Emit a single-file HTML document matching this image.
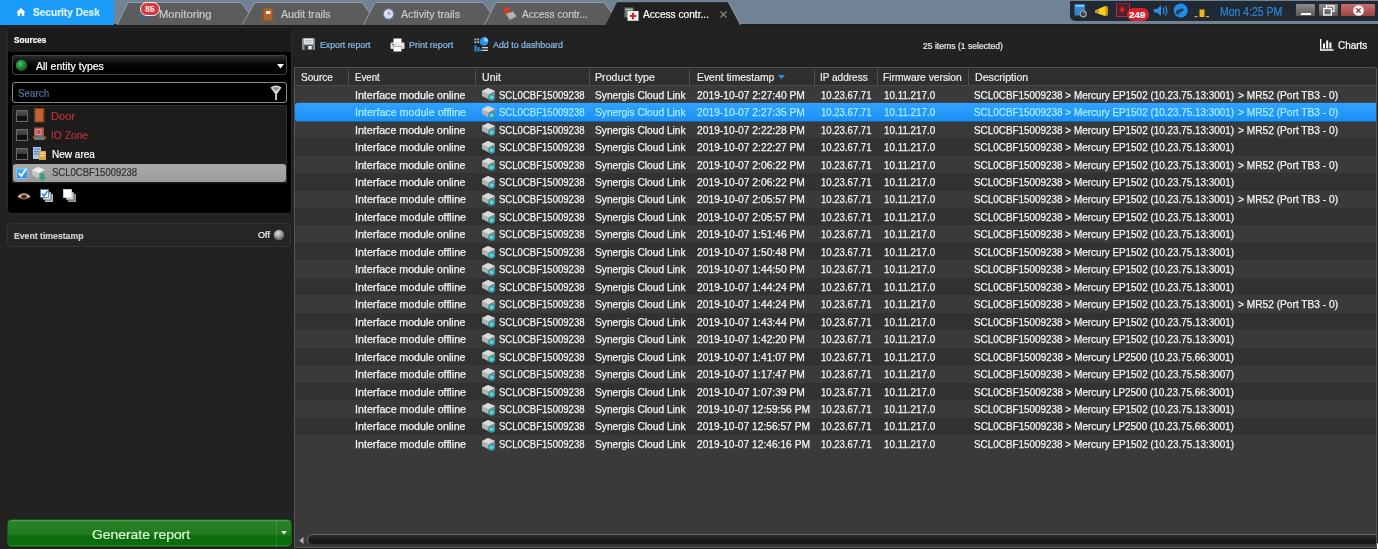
<!DOCTYPE html>
<html><head><meta charset="utf-8"><title>Security Desk</title>
<style>
*{box-sizing:border-box;margin:0;padding:0}
html,body{width:1378px;height:549px;overflow:hidden;background:#222;font-family:"Liberation Sans",sans-serif;color:#fff}
#root{position:absolute;left:0;top:0;width:1378px;height:549px;will-change:transform}
.abs,.c,.t{position:absolute;white-space:pre}
.t{transform-origin:0 50%;line-height:1;-webkit-text-stroke:.2px}
/* top strip */
#top{position:absolute;left:0;top:0;width:1378px;height:24.4px;background:#718294}
#topline{position:absolute;left:0;top:24.4px;width:1378px;height:2.6px;background:#1f1f1f}
#home{position:absolute;left:0;top:0;width:114px;height:25px;background:#1a9bf7}
#tabs{position:absolute;left:0;top:0}
.tabtxt{font-size:10.4px;color:#c9c9c9}
/* tray */
#tray{position:absolute;left:1069.5px;top:.6px;width:309px;height:20.8px;background:#212a34;border-bottom-left-radius:5px}
.wb{position:absolute;top:2.5px;height:14.5px;border-radius:2px;border:1px solid #2a2a2a}
/* left panel */
#src{position:absolute;left:6.6px;top:27px;width:285.6px;height:186.6px;background:#000;border-radius:4px;border:1px solid #2c2c2c;overflow:hidden}
#srchead{position:absolute;left:0;top:0;width:100%;height:23.5px;background:#1b1b1b}
#combo{position:absolute;left:11.7px;top:55.2px;width:275.5px;height:20.2px;border:1px solid #444;border-radius:3px;background:linear-gradient(#2a2a2a,#000 55%)}
#search{position:absolute;left:11.7px;top:82px;width:275.5px;height:21px;border:1px solid #8a8a8a;border-radius:3px;background:#000}
#tree{position:absolute;left:11.7px;top:104.5px;width:275.5px;height:79px;background:#1c1c1c;border:1px solid #303030;border-bottom-color:#0a0a0a;border-radius:3px}
#treesel{position:absolute;left:12.7px;top:163.5px;width:273.8px;height:18.8px;background:linear-gradient(#a9a9a9,#9c9c9c);border-radius:3px}
.cb{position:absolute;left:16px;width:12px;height:12px;background:linear-gradient(#505050 0,#3c3c3c 45%,#0c0c0c 50%,#141414);border:1px solid #6a6a6a}
#evt{position:absolute;left:6.6px;top:223px;width:284.4px;height:23.6px;background:#252525;border:1px solid #323232;border-radius:4px}
#gen{position:absolute;left:7px;top:518.8px;width:285px;height:28.6px;border-radius:4.5px;background:linear-gradient(#3a9038 0,#2a8228 8%,#217a1f 56%,#0b6e0b 60%,#0a6b0a);border:1px solid #155c13;box-shadow:inset 0 1px 0 #4a9c48, inset 0 -1px 0 #2f8a2d}
/* right */
#tbl{position:absolute;left:294px;top:66.7px;width:1083px;height:481px;background:#3a3a3a;border:1px solid #565656;border-top-color:#525252;border-top-right-radius:3px}
#thead{position:absolute;left:295px;top:67.7px;width:1081px;height:18px;background:#2f2f2f;border-bottom:1px solid #484848;border-top-right-radius:2px}
.hs{position:absolute;top:68.5px;width:1px;height:16px;background:#505050}
.h{font-size:10.3px;color:#ececec}
.r{position:absolute;left:295px;width:1081px;height:17.46px}
.r.alt{background:#323232}
.r.sel{background:linear-gradient(#32a2ff,#1b8ff3);border-radius:3px 0 0 3px;box-shadow:0 1px 0 #1d5fa5,0 -.5px 0 #2a5a8a}
.c{font-size:10.3px;color:#f4f4f4;-webkit-text-stroke:.25px}
.cs{color:#a0ecff}
.ui{position:absolute;left:481px}
.tb{font-size:8.3px;color:#8bbbe8}
</style></head>
<body>
<div id="root">
<svg width="0" height="0" style="position:absolute">
<defs>
<g id="unit">
 <path d="M1 4 L7 1 L14 4 L14 9 L8 12.5 L1 9 Z" fill="#b0b4b2"/>
 <path d="M1 4 L7 1 L14 4 L8 7.3 Z" fill="#d8dad8"/>
 <path d="M8 7.3 L14 4 L14 9 L8 12.5 Z" fill="#868b8a"/>
 <circle cx="10.6" cy="10.2" r="3.5" fill="#2f9aa6"/>
 <circle cx="10.6" cy="10.2" r="1.9" fill="#6fcfd0"/>
</g>
</defs>
</svg>

<div id="top"></div>
<div id="topline"></div>

<!-- tabs -->
<svg id="tabs" width="760" height="25" viewBox="0 0 760 25">
 <g fill="#5c5c5c">
  <path d="M117 25 L128 2.5 L241 2.5 L258 25 Z"/><path d="M117 25 L128 2.5 L241 2.5 L258 25" fill="none" stroke="#98a2b2" stroke-width=".9"/>
  <path d="M242 25 L254.8 2.5 L362 2.5 L379 25 Z"/><path d="M242 25 L254.8 2.5 L362 2.5 L379 25" fill="none" stroke="#98a2b2" stroke-width=".9"/>
  <path d="M363.3 25 L375 2.5 L483 2.5 L500 25 Z"/><path d="M363.3 25 L375 2.5 L483 2.5 L500 25" fill="none" stroke="#98a2b2" stroke-width=".9"/>
  <path d="M484.3 25 L495.8 2.5 L604 2.5 L621 25 Z"/><path d="M484.3 25 L495.8 2.5 L604 2.5 L621 25" fill="none" stroke="#98a2b2" stroke-width=".9"/>
 </g>
 <path d="M605.5 25 L617 2.2 L728.5 2.2 L740.5 25 Z" fill="#212121"/>
 <path d="M728.5 2.2 L740.5 25" fill="none" stroke="#9fb0c2" stroke-width=".8"/>
</svg>
<div id="home"></div>
<!-- home icon -->
<svg class="abs" style="left:16px;top:7.8px" width="9.8" height="8.6" viewBox="0 0 12 11"><path d="M6 0 L12 5.5 L10.3 5.5 L10.3 10.5 L7.2 10.5 L7.2 7 L4.8 7 L4.8 10.5 L1.7 10.5 L1.7 5.5 L0 5.5 Z" fill="#fff"/></svg>
<span class="t" style="left:33.04px;top:7px;transform:scaleX(0.9450) rotate(0.02deg);font-size:10.7px;font-weight:700;color:#d9f3ff">Security Desk</span>

<!-- monitoring tab -->
<svg class="abs" style="left:137px;top:10px" width="16" height="12" viewBox="0 0 16 12"><path d="M1 3 L7 10 L14 4" stroke="#456a88" stroke-width="2.6" fill="none" opacity=".8"/></svg>
<div class="abs" style="left:140px;top:1.9px;width:19.7px;height:14.2px;border-radius:7.1px;background:#d8363e;border:1.9px solid #fbf4f4"></div>
<span class="t" style="left:145.31px;top:6px;transform:scaleX(1.0325) rotate(0.02deg);font-size:8.2px;font-weight:700;color:#ffe0e0">85</span>
<span class="t tabtxt" style="left:159.39px;top:10px;transform:scaleX(1.0813) rotate(0.02deg);">Monitoring</span>

<!-- audit trails -->
<svg class="abs" style="left:261.5px;top:7.5px" width="11" height="13" viewBox="0 0 11 13"><rect x="0" y="0" width="10.5" height="13" rx="1" fill="#8a4f22"/><rect x="1.5" y="0.5" width="9" height="12" fill="#a8632e"/><rect x="4" y="3" width="4.5" height="3" fill="#f3e2c5"/></svg>
<span class="t tabtxt" style="left:280.50px;top:10px;transform:scaleX(1.0226) rotate(0.02deg);">Audit trails</span>

<!-- activity trails -->
<svg class="abs" style="left:382px;top:7px" width="13" height="14" viewBox="0 0 13 14"><circle cx="6.5" cy="7" r="6" fill="#62789c"/><circle cx="6.5" cy="7" r="4.7" fill="#dcdfe8"/><path d="M6.5 4.2 L6.5 7.3 L8.8 6.2" stroke="#8c95a8" stroke-width="1.1" fill="none"/></svg>
<span class="t tabtxt" style="left:401.00px;top:10px;transform:scaleX(1.0215) rotate(0.02deg);">Activity trails</span>

<!-- access contr (inactive) -->
<svg class="abs" style="left:502.5px;top:7px" width="14" height="14" viewBox="0 0 14 14"><rect x="0.5" y="0.5" width="6.5" height="7" fill="#c4452f"/><path d="M3 7 L10 4.5 L13.5 9.5 L6.5 13 Z" fill="#b5b5b5"/><path d="M3 7 L6.5 13 L6.5 11.5 Z" fill="#7e7e7e"/></svg>
<span class="t tabtxt" style="left:522.40px;top:10px;transform:scaleX(0.9746) rotate(0.02deg);">Access contr...</span>

<!-- access contr (active) -->
<svg class="abs" style="left:624px;top:7px" width="15" height="14" viewBox="0 0 15 14"><rect x="0.5" y="0.5" width="9" height="10" fill="#6d7a6d"/><rect x="1.5" y="1.8" width="7" height="1" fill="#cfd6cf"/><rect x="3.5" y="4" width="11" height="9.8" fill="#f4f4f4"/><path d="M8 5.8 h2 v2.2 h2.2 v2 h-2.2 v2.2 h-2 v-2.2 h-2.2 v-2 h2.2 z" fill="#d8232f"/></svg>
<span class="t" style="left:643.00px;top:10px;transform:scaleX(0.9761) rotate(0.02deg);font-size:10.4px;color:#fff">Access contr...</span>
<svg class="abs" style="left:719.5px;top:10.5px" width="7" height="7" viewBox="0 0 7 7"><path d="M0.5 0.5 L6.5 6.5 M6.5 0.5 L0.5 6.5" stroke="#8d8d8d" stroke-width="1.1"/></svg>

<!-- tray -->
<div id="tray"></div>
<svg class="abs" style="left:1074px;top:3px" width="136" height="19" viewBox="0 0 136 19">
 <!-- dashboard icon -->
 <rect x="0.5" y="1" width="10.5" height="11.5" fill="#2f86c9"/>
 <rect x="1.5" y="2" width="8.5" height="2" fill="#7cc0ee"/>
 <circle cx="9.3" cy="10.8" r="3.6" fill="#9aa0a6"/><circle cx="9.3" cy="10.8" r="2.3" fill="#2a3440"/><path d="M9.3 10.8 L11 9" stroke="#e0703a" stroke-width="1.2"/>
 <!-- horn -->
 <path d="M21 7.5 L31.5 2.8 L31.5 13.2 L21 9.5 Z" fill="#f2d21c"/><rect x="31" y="3.5" width="2.8" height="9" fill="#d9a514"/><path d="M21 7.5 L25 6 L25 11 L21 9.5Z" fill="#c9961a"/>
 <!-- red box -->
 <rect x="42.5" y="0" width="13" height="13.5" fill="rgba(150,20,30,.35)" stroke="#a83040" stroke-width="1"/>
 <path d="M48 2.5 L49.3 5.6 L52 6.6 L49.3 7.7 L48 10.8 L46.8 7.7 L44.2 6.6 L46.8 5.6Z" fill="#f01822"/>
 <!-- speaker -->
 <path d="M80 6 L83 6 L87 2.2 L87 13 L83 9.5 L80 9.5Z" fill="#2b8ee0"/>
 <path d="M89 4.5 Q91 7.6 89 11 M91.3 3 Q94.3 7.6 91.3 12.5" stroke="#2b8ee0" stroke-width="1.3" fill="none"/>
 <!-- globe -->
 <circle cx="106.7" cy="7.5" r="7" fill="#1f8ee6"/>
 <path d="M101.5 8.5 Q105 5 109 5.5 Q111 6.5 108 8.5 Q105 10 104 12.5 Q102 11.5 101.5 8.5Z" fill="#1a2a3c" opacity=".75"/>
 <!-- network -->
 <rect x="125.5" y="6.5" width="5" height="7.5" fill="#f2b51d"/><rect x="120.5" y="13" width="3" height="1.2" fill="#c9b35b"/><rect x="132" y="13" width="3" height="1.2" fill="#c9b35b"/>
</svg>
<div class="abs" style="left:1126.5px;top:8px;width:22px;height:12.5px;border-radius:6.5px;background:#de1f29"></div>
<span class="t" style="left:1129.27px;top:10px;transform:scaleX(1.0207) rotate(0.02deg);font-size:9.6px;font-weight:700;color:#fff">249</span>
<span class="t" style="left:1220.10px;top:6px;transform:scaleX(0.8385) rotate(0.02deg);font-size:12.5px;color:#2b86d6">Mon 4:25 PM</span>
<div class="wb" style="left:1295px;width:21px;background:linear-gradient(#8b8b8b,#5b5b5b)"></div>
<div class="wb" style="left:1317.5px;width:21.5px;background:linear-gradient(#8b8b8b,#5b5b5b)"></div>
<div class="wb" style="left:1340px;width:35.5px;background:linear-gradient(#c87070,#9c4444)"></div>
<div class="abs" style="left:1300.5px;top:13px;width:10.5px;height:2px;background:#fff"></div>
<svg class="abs" style="left:1322.5px;top:4.5px" width="12" height="11" viewBox="0 0 12 11"><path d="M3.5 3 V0.8 H11 V6.5 H8.5" stroke="#fff" stroke-width="1.2" fill="none"/><rect x="0.8" y="3.5" width="7.5" height="6.5" stroke="#fff" stroke-width="1.3" fill="none"/></svg>
<svg class="abs" style="left:1352.5px;top:4.5px" width="11" height="11" viewBox="0 0 11 11"><circle cx="5.5" cy="5.5" r="5.3" fill="#fff"/><path d="M3.3 3.3 L7.7 7.7 M7.7 3.3 L3.3 7.7" stroke="#a04545" stroke-width="1.5"/></svg>

<!-- left: sources -->
<div id="src"><div id="srchead"></div></div>
<span class="t" style="left:13.66px;top:36px;transform:scaleX(0.9298) rotate(0.02deg);font-size:8.8px;font-weight:700;color:#fff">Sources</span>
<div id="combo"></div>
<svg class="abs" style="left:15.4px;top:58.8px" width="13" height="13" viewBox="0 0 13 13"><defs><radialGradient id="gg" cx=".4" cy=".35" r=".7"><stop offset="0" stop-color="#59c46a"/><stop offset=".5" stop-color="#1f8a38"/><stop offset="1" stop-color="#0a3f1c"/></radialGradient></defs><circle cx="6.5" cy="6.5" r="5.8" fill="url(#gg)"/></svg>
<span class="t" style="left:36.20px;top:61px;transform:scaleX(1.0025) rotate(0.02deg);font-size:10.5px;color:#fff">All entity types</span>
<svg class="abs" style="left:276.5px;top:63.5px" width="7" height="5" viewBox="0 0 7 5"><path d="M0 0 H7 L3.5 4.5Z" fill="#fff"/></svg>
<div id="search"></div>
<span class="t" style="left:18.10px;top:88px;transform:scaleX(0.9364) rotate(0.02deg);font-size:10.5px;color:#54759c">Search</span>
<svg class="abs" style="left:270px;top:84.5px" width="12" height="16" viewBox="0 0 12 16"><path d="M0.5 2.5 Q6 -1.5 11.5 2.5 L7 9 L7 15 L5.2 15 L5.2 9 Z" fill="#d8d8d8"/><path d="M2.5 3 Q6 1 9.5 3 L6 6Z" fill="#8a8a8a"/></svg>
<div id="tree"></div>
<div id="treesel"></div>
<div class="cb" style="top:110px"></div>
<div class="cb" style="top:129.2px"></div>
<div class="cb" style="top:147.8px"></div>
<div class="abs" style="left:16.3px;top:167.5px;width:11.4px;height:11.4px;background:linear-gradient(#55b0f5,#2f8fe0);border:1px solid #7fc0f5"></div>
<svg class="abs" style="left:17px;top:168px" width="10" height="10" viewBox="0 0 10 10"><path d="M1.8 5 L4.3 8 L9 1" stroke="#fff" stroke-width="1.8" fill="none"/></svg>
<!-- tree icons -->
<svg class="abs" style="left:33.5px;top:108px" width="11" height="15" viewBox="0 0 11 15"><rect x="0" y="0" width="10.5" height="14.5" fill="#7a3f1c"/><rect x="1.5" y="1" width="7.5" height="12.5" fill="#c0632e"/></svg>
<svg class="abs" style="left:32px;top:127px" width="15" height="15" viewBox="0 0 15 15"><rect x="2" y="0.5" width="10" height="9" fill="#b0544c"/><rect x="4" y="2.5" width="5" height="5" fill="none" stroke="#d8a098" stroke-width="1"/><path d="M0.5 9.5 h14 l-2 3.5 h-10z" fill="#8a7048"/><path d="M5 8.5 h5 v2.5 l-2.5 2.5 l-2.5 -2.5z" fill="#5a72a0"/></svg>
<svg class="abs" style="left:32px;top:146px" width="15" height="15" viewBox="0 0 15 15"><rect x="1" y="1" width="8" height="12" fill="#a9c7e8"/><rect x="2" y="2.5" width="6" height="1.2" fill="#5c88bd"/><rect x="2" y="5" width="6" height="1.2" fill="#5c88bd"/><rect x="2" y="7.5" width="6" height="1.2" fill="#5c88bd"/><rect x="7" y="5" width="7" height="9" fill="#e0a442"/><rect x="8" y="6.5" width="5" height="1.2" fill="#fbe3a8"/><rect x="8" y="9" width="5" height="1.2" fill="#fbe3a8"/></svg>
<svg class="abs" style="left:31px;top:165.5px" width="17" height="16" viewBox="0 0 17 16"><path d="M1 4 L7 1 L14 4 L14 9 L8 12.5 L1 9 Z" fill="#c4c6c6"/><path d="M1 4 L7 1 L14 4 L8 7.3 Z" fill="#eceeee"/><path d="M8 7.3 L14 4 L14 9 L8 12.5 Z" fill="#9a9f9f"/><path d="M9.5 7.5 h3.6 v3.5 h2 l-3.8 4.5 l-3.8 -4.5 h2z" fill="#2aa27a"/></svg>
<span class="t" style="left:51.38px;top:111px;transform:scaleX(1.0538) rotate(0.02deg);font-size:10.5px;color:#bf2f38">Door</span>
<span class="t" style="left:51.35px;top:130px;transform:scaleX(0.9774) rotate(0.02deg);font-size:10.5px;color:#bf2f38">IO Zone</span>
<span class="t" style="left:51.66px;top:149px;transform:scaleX(0.9555) rotate(0.02deg);font-size:10.5px;color:#fff">New area</span>
<span class="t" style="left:51.72px;top:168px;transform:scaleX(0.9237) rotate(0.02deg);font-size:10.3px;color:#303030">SCL0CBF15009238</span>
<!-- bottom icons -->
<svg class="abs" style="left:17px;top:192px" width="14" height="9" viewBox="0 0 14 9"><path d="M0.5 4.5 Q7 -2 13.5 4.5 Q7 10 0.5 4.5Z" fill="#e6d9cf"/><ellipse cx="7" cy="4.8" rx="3.6" ry="2.6" fill="#8a4a2a"/><circle cx="7" cy="4.8" r="1.3" fill="#1a1a1a"/></svg>
<svg class="abs" style="left:40px;top:189px" width="14" height="14" viewBox="0 0 14 14"><rect x="5" y="5" width="8" height="8" fill="#bdbdbd"/><rect x="3" y="3" width="8" height="8" fill="#dcdcdc" stroke="#333" stroke-width=".6"/><rect x="0.5" y="0.5" width="8" height="8" fill="#fff" stroke="#3c78b8" stroke-width=".8"/><path d="M2 4.5 L4 7 L7.5 2" stroke="#2a7fd8" stroke-width="1.4" fill="none"/></svg>
<svg class="abs" style="left:63px;top:189px" width="14" height="14" viewBox="0 0 14 14"><rect x="5" y="5" width="8" height="8" fill="#9d9d9d"/><rect x="3" y="3" width="8" height="8" fill="#cfcfcf" stroke="#333" stroke-width=".6"/><rect x="0.5" y="0.5" width="8" height="8" fill="#fff" stroke="#ddd" stroke-width=".8"/></svg>

<!-- event timestamp -->
<div id="evt"></div>
<span class="t" style="left:13.73px;top:232px;transform:scaleX(0.9867) rotate(0.02deg);font-size:8.8px;font-weight:700;color:#cfcfcf">Event timestamp</span>
<span class="t" style="left:258.11px;top:231px;transform:scaleX(1.0427) rotate(0.02deg);font-size:8.7px;color:#f0f0f0">Off</span>
<svg class="abs" style="left:273px;top:228.5px" width="12" height="12" viewBox="0 0 12 12"><defs><radialGradient id="lg" cx=".4" cy=".35" r=".7"><stop offset="0" stop-color="#e4e4e4"/><stop offset=".6" stop-color="#8e8e8e"/><stop offset="1" stop-color="#4a4a4a"/></radialGradient></defs><circle cx="6" cy="6" r="5.3" fill="url(#lg)"/></svg>

<!-- generate -->
<div id="gen"></div>
<div class="abs" style="left:276.3px;top:520px;width:1px;height:26.5px;background:rgba(255,255,255,.13)"></div>
<span class="t" style="left:91.63px;top:529px;transform:scaleX(1.1214) rotate(0.02deg);font-size:12.4px;color:#daf6d6">Generate report</span>
<svg class="abs" style="left:280.6px;top:531.2px" width="6" height="4" viewBox="0 0 7 5"><path d="M0 0 H7 L3.5 4.5Z" fill="#fff"/></svg>

<!-- toolbar -->
<svg class="abs" style="left:301.5px;top:38px" width="13" height="12" viewBox="0 0 13 12"><rect x="0" y="0" width="13" height="12" rx="1" fill="#878b90"/><rect x="1.8" y="0.6" width="9.4" height="5.6" fill="#e9e9e9"/><rect x="2.8" y="2" width="7.4" height=".9" fill="#b5b9bd"/><rect x="2.8" y="3.8" width="7.4" height=".9" fill="#b5b9bd"/><rect x="2.4" y="7.4" width="8.4" height="4.6" fill="#3c4147"/><rect x="6.3" y="8" width="3.4" height="3.4" fill="#f2f2f2"/></svg>
<span class="t tb" style="left:320.09px;top:41px;transform:scaleX(1.0525) rotate(0.02deg);">Export report</span>
<svg class="abs" style="left:390px;top:37.5px" width="15" height="14" viewBox="0 0 15 14"><rect x="3.5" y="0.5" width="8" height="5" fill="#fff"/><rect x="0.5" y="4.5" width="14" height="6.5" rx="1.2" fill="#e6e6e6"/><rect x="3.5" y="8.5" width="8" height="5" fill="#fff" stroke="#888" stroke-width=".6"/><rect x="2" y="6" width="2" height="1.2" fill="#555"/></svg>
<span class="t tb" style="left:409.39px;top:41px;transform:scaleX(1.0761) rotate(0.02deg);">Print report</span>
<svg class="abs" style="left:473.5px;top:37px" width="15" height="15" viewBox="0 0 15 15"><circle cx="10" cy="4.5" r="4.3" fill="#2a8fe6"/><path d="M10 4.5 L10 0.2 A4.3 4.3 0 0 1 14.3 4.5Z" fill="#8fd0ff"/><g fill="#c0c4c8"><rect x="0.5" y="1.5" width="1.8" height="1.8"/><rect x="3.3" y="1.5" width="1.8" height="1.8"/><rect x="0.5" y="4.3" width="1.8" height="1.8"/><rect x="3.3" y="4.3" width="1.8" height="1.8"/></g><g fill="#2a8fe6"><rect x="0.5" y="8.5" width="2" height="6"/><rect x="3.5" y="10" width="2" height="4.5"/><rect x="6.2" y="12" width="1.2" height="2.5"/></g><g fill="#d0d4d8"><rect x="8" y="10" width="6" height="1.3"/><rect x="8" y="12.7" width="6" height="1.3"/></g></svg>
<span class="t tb" style="left:492.64px;top:41px;transform:scaleX(1.0682) rotate(0.02deg);">Add to dashboard</span>
<span class="t" style="left:923.34px;top:43px;transform:scaleX(1.0503) rotate(0.02deg);font-size:8.2px;color:#e8e8e8">25 items (1 selected)</span>
<svg class="abs" style="left:1320px;top:38.5px" width="14" height="12" viewBox="0 0 14 12"><path d="M0.7 0 V11 H13.5" stroke="#fff" stroke-width="1.3" fill="none"/><rect x="3" y="4.5" width="2" height="5" fill="#fff"/><rect x="6.2" y="1.5" width="2" height="8" fill="#fff"/><rect x="9.4" y="3.5" width="2" height="6" fill="#fff"/></svg>
<span class="t" style="left:1337.75px;top:40px;transform:scaleX(0.9303) rotate(0.02deg);font-size:10.7px;color:#fff">Charts</span>

<!-- table -->
<div id="tbl"></div>
<div id="thead"></div>
<div class="hs" style="left:347.5px"></div>
<div class="hs" style="left:474.5px"></div>
<div class="hs" style="left:588.5px"></div>
<div class="hs" style="left:689px"></div>
<div class="hs" style="left:814px"></div>
<div class="hs" style="left:877px"></div>
<div class="hs" style="left:967.5px"></div>
<span class="t h" style="left:301.00px;top:73px;transform:scaleX(0.9784) rotate(0.02deg);">Source</span>
<span class="t h" style="left:355.19px;top:73px;transform:scaleX(0.9382) rotate(0.02deg);">Event</span>
<span class="t h" style="left:482.29px;top:73px;transform:scaleX(1.0297) rotate(0.02deg);">Unit</span>
<span class="t h" style="left:594.84px;top:73px;transform:scaleX(1.0357) rotate(0.02deg);">Product type</span>
<span class="t h" style="left:696.85px;top:73px;transform:scaleX(1.0090) rotate(0.02deg);">Event timestamp</span>
<svg class="abs" style="left:777.5px;top:75px" width="7" height="4" viewBox="0 0 7 4"><path d="M0 0 H7 L3.5 4Z" fill="#2a8fe6"/></svg>
<span class="t h" style="left:819.97px;top:73px;transform:scaleX(0.9721) rotate(0.02deg);">IP address</span>
<span class="t h" style="left:883.36px;top:73px;transform:scaleX(0.9976) rotate(0.02deg);">Firmware version</span>
<span class="t h" style="left:974.74px;top:73px;transform:scaleX(1.0346) rotate(0.02deg);">Description</span>

<div class="r" style="top:85.80px"></div><span class="t c" style="left:355.03px;top:91px;transform:scaleX(1.0320) rotate(0.02deg);">Interface module online</span><svg class="ui" style="top:87.40px" viewBox="0 0 16 14" width="16" height="14"><use href="#unit"/></svg><span class="t c" style="left:499.32px;top:91px;transform:scaleX(0.9281) rotate(0.02deg);">SCL0CBF15009238</span><span class="t c" style="left:595.40px;top:91px;transform:scaleX(0.9894) rotate(0.02deg);">Synergis Cloud Link</span><span class="t c" style="left:696.77px;top:91px;transform:scaleX(0.9970) rotate(0.02deg);">2019-10-07 2:27:40 PM</span><span class="t c" style="left:821.11px;top:91px;transform:scaleX(0.9285) rotate(0.02deg);">10.23.67.71</span><span class="t c" style="left:884.20px;top:91px;transform:scaleX(0.9534) rotate(0.02deg);">10.11.217.0</span><span class="t c" style="left:974.41px;top:91px;transform:scaleX(0.9615) rotate(0.02deg);">SCL0CBF15009238 &gt; Mercury EP1502 (10.23.75.13:3001)</span><span class="t c" style="left:1238.42px;top:91px;transform:scaleX(0.9869) rotate(0.02deg);">&gt; MR52 (Port TB3 - 0)</span>
<div class="r sel" style="top:103.26px"></div><span class="t c cs" style="left:355.02px;top:108px;transform:scaleX(1.0391) rotate(0.02deg);">Interface module offline</span><svg class="ui" style="top:104.86px" viewBox="0 0 16 14" width="16" height="14"><use href="#unit"/></svg><span class="t c cs" style="left:499.32px;top:108px;transform:scaleX(0.9281) rotate(0.02deg);">SCL0CBF15009238</span><span class="t c cs" style="left:595.40px;top:108px;transform:scaleX(0.9894) rotate(0.02deg);">Synergis Cloud Link</span><span class="t c cs" style="left:696.77px;top:108px;transform:scaleX(0.9970) rotate(0.02deg);">2019-10-07 2:27:35 PM</span><span class="t c cs" style="left:821.11px;top:108px;transform:scaleX(0.9285) rotate(0.02deg);">10.23.67.71</span><span class="t c cs" style="left:884.20px;top:108px;transform:scaleX(0.9534) rotate(0.02deg);">10.11.217.0</span><span class="t c cs" style="left:974.41px;top:108px;transform:scaleX(0.9615) rotate(0.02deg);">SCL0CBF15009238 &gt; Mercury EP1502 (10.23.75.13:3001)</span><span class="t c cs" style="left:1238.42px;top:108px;transform:scaleX(0.9869) rotate(0.02deg);">&gt; MR52 (Port TB3 - 0)</span>
<div class="r" style="top:120.72px"></div><span class="t c" style="left:355.03px;top:126px;transform:scaleX(1.0320) rotate(0.02deg);">Interface module online</span><svg class="ui" style="top:122.32px" viewBox="0 0 16 14" width="16" height="14"><use href="#unit"/></svg><span class="t c" style="left:499.32px;top:126px;transform:scaleX(0.9281) rotate(0.02deg);">SCL0CBF15009238</span><span class="t c" style="left:595.40px;top:126px;transform:scaleX(0.9894) rotate(0.02deg);">Synergis Cloud Link</span><span class="t c" style="left:696.77px;top:126px;transform:scaleX(0.9970) rotate(0.02deg);">2019-10-07 2:22:28 PM</span><span class="t c" style="left:821.11px;top:126px;transform:scaleX(0.9285) rotate(0.02deg);">10.23.67.71</span><span class="t c" style="left:884.20px;top:126px;transform:scaleX(0.9534) rotate(0.02deg);">10.11.217.0</span><span class="t c" style="left:974.41px;top:126px;transform:scaleX(0.9615) rotate(0.02deg);">SCL0CBF15009238 &gt; Mercury EP1502 (10.23.75.13:3001)</span><span class="t c" style="left:1238.42px;top:126px;transform:scaleX(0.9869) rotate(0.02deg);">&gt; MR52 (Port TB3 - 0)</span>
<div class="r alt" style="top:138.18px"></div><span class="t c" style="left:355.03px;top:143px;transform:scaleX(1.0320) rotate(0.02deg);">Interface module online</span><svg class="ui" style="top:139.78px" viewBox="0 0 16 14" width="16" height="14"><use href="#unit"/></svg><span class="t c" style="left:499.32px;top:143px;transform:scaleX(0.9281) rotate(0.02deg);">SCL0CBF15009238</span><span class="t c" style="left:595.40px;top:143px;transform:scaleX(0.9894) rotate(0.02deg);">Synergis Cloud Link</span><span class="t c" style="left:696.77px;top:143px;transform:scaleX(0.9970) rotate(0.02deg);">2019-10-07 2:22:27 PM</span><span class="t c" style="left:821.11px;top:143px;transform:scaleX(0.9285) rotate(0.02deg);">10.23.67.71</span><span class="t c" style="left:884.20px;top:143px;transform:scaleX(0.9534) rotate(0.02deg);">10.11.217.0</span><span class="t c" style="left:974.41px;top:143px;transform:scaleX(0.9615) rotate(0.02deg);">SCL0CBF15009238 &gt; Mercury EP1502 (10.23.75.13:3001)</span>
<div class="r" style="top:155.64px"></div><span class="t c" style="left:355.03px;top:161px;transform:scaleX(1.0320) rotate(0.02deg);">Interface module online</span><svg class="ui" style="top:157.24px" viewBox="0 0 16 14" width="16" height="14"><use href="#unit"/></svg><span class="t c" style="left:499.32px;top:161px;transform:scaleX(0.9281) rotate(0.02deg);">SCL0CBF15009238</span><span class="t c" style="left:595.40px;top:161px;transform:scaleX(0.9894) rotate(0.02deg);">Synergis Cloud Link</span><span class="t c" style="left:696.77px;top:161px;transform:scaleX(0.9970) rotate(0.02deg);">2019-10-07 2:06:22 PM</span><span class="t c" style="left:821.11px;top:161px;transform:scaleX(0.9285) rotate(0.02deg);">10.23.67.71</span><span class="t c" style="left:884.20px;top:161px;transform:scaleX(0.9534) rotate(0.02deg);">10.11.217.0</span><span class="t c" style="left:974.41px;top:161px;transform:scaleX(0.9615) rotate(0.02deg);">SCL0CBF15009238 &gt; Mercury EP1502 (10.23.75.13:3001)</span><span class="t c" style="left:1238.42px;top:161px;transform:scaleX(0.9869) rotate(0.02deg);">&gt; MR52 (Port TB3 - 0)</span>
<div class="r alt" style="top:173.10px"></div><span class="t c" style="left:355.03px;top:178px;transform:scaleX(1.0320) rotate(0.02deg);">Interface module online</span><svg class="ui" style="top:174.70px" viewBox="0 0 16 14" width="16" height="14"><use href="#unit"/></svg><span class="t c" style="left:499.32px;top:178px;transform:scaleX(0.9281) rotate(0.02deg);">SCL0CBF15009238</span><span class="t c" style="left:595.40px;top:178px;transform:scaleX(0.9894) rotate(0.02deg);">Synergis Cloud Link</span><span class="t c" style="left:696.77px;top:178px;transform:scaleX(0.9970) rotate(0.02deg);">2019-10-07 2:06:22 PM</span><span class="t c" style="left:821.11px;top:178px;transform:scaleX(0.9285) rotate(0.02deg);">10.23.67.71</span><span class="t c" style="left:884.20px;top:178px;transform:scaleX(0.9534) rotate(0.02deg);">10.11.217.0</span><span class="t c" style="left:974.41px;top:178px;transform:scaleX(0.9615) rotate(0.02deg);">SCL0CBF15009238 &gt; Mercury EP1502 (10.23.75.13:3001)</span>
<div class="r" style="top:190.56px"></div><span class="t c" style="left:355.02px;top:195px;transform:scaleX(1.0391) rotate(0.02deg);">Interface module offline</span><svg class="ui" style="top:192.16px" viewBox="0 0 16 14" width="16" height="14"><use href="#unit"/></svg><span class="t c" style="left:499.32px;top:195px;transform:scaleX(0.9281) rotate(0.02deg);">SCL0CBF15009238</span><span class="t c" style="left:595.40px;top:195px;transform:scaleX(0.9894) rotate(0.02deg);">Synergis Cloud Link</span><span class="t c" style="left:696.77px;top:195px;transform:scaleX(0.9970) rotate(0.02deg);">2019-10-07 2:05:57 PM</span><span class="t c" style="left:821.11px;top:195px;transform:scaleX(0.9285) rotate(0.02deg);">10.23.67.71</span><span class="t c" style="left:884.20px;top:195px;transform:scaleX(0.9534) rotate(0.02deg);">10.11.217.0</span><span class="t c" style="left:974.41px;top:195px;transform:scaleX(0.9615) rotate(0.02deg);">SCL0CBF15009238 &gt; Mercury EP1502 (10.23.75.13:3001)</span><span class="t c" style="left:1238.42px;top:195px;transform:scaleX(0.9869) rotate(0.02deg);">&gt; MR52 (Port TB3 - 0)</span>
<div class="r alt" style="top:208.02px"></div><span class="t c" style="left:355.02px;top:213px;transform:scaleX(1.0391) rotate(0.02deg);">Interface module offline</span><svg class="ui" style="top:209.62px" viewBox="0 0 16 14" width="16" height="14"><use href="#unit"/></svg><span class="t c" style="left:499.32px;top:213px;transform:scaleX(0.9281) rotate(0.02deg);">SCL0CBF15009238</span><span class="t c" style="left:595.40px;top:213px;transform:scaleX(0.9894) rotate(0.02deg);">Synergis Cloud Link</span><span class="t c" style="left:696.77px;top:213px;transform:scaleX(0.9970) rotate(0.02deg);">2019-10-07 2:05:57 PM</span><span class="t c" style="left:821.11px;top:213px;transform:scaleX(0.9285) rotate(0.02deg);">10.23.67.71</span><span class="t c" style="left:884.20px;top:213px;transform:scaleX(0.9534) rotate(0.02deg);">10.11.217.0</span><span class="t c" style="left:974.41px;top:213px;transform:scaleX(0.9615) rotate(0.02deg);">SCL0CBF15009238 &gt; Mercury EP1502 (10.23.75.13:3001)</span>
<div class="r" style="top:225.48px"></div><span class="t c" style="left:355.03px;top:230px;transform:scaleX(1.0320) rotate(0.02deg);">Interface module online</span><svg class="ui" style="top:227.08px" viewBox="0 0 16 14" width="16" height="14"><use href="#unit"/></svg><span class="t c" style="left:499.32px;top:230px;transform:scaleX(0.9281) rotate(0.02deg);">SCL0CBF15009238</span><span class="t c" style="left:595.40px;top:230px;transform:scaleX(0.9894) rotate(0.02deg);">Synergis Cloud Link</span><span class="t c" style="left:696.77px;top:230px;transform:scaleX(0.9970) rotate(0.02deg);">2019-10-07 1:51:46 PM</span><span class="t c" style="left:821.11px;top:230px;transform:scaleX(0.9285) rotate(0.02deg);">10.23.67.71</span><span class="t c" style="left:884.20px;top:230px;transform:scaleX(0.9534) rotate(0.02deg);">10.11.217.0</span><span class="t c" style="left:974.41px;top:230px;transform:scaleX(0.9615) rotate(0.02deg);">SCL0CBF15009238 &gt; Mercury EP1502 (10.23.75.13:3001)</span>
<div class="r alt" style="top:242.94px"></div><span class="t c" style="left:355.02px;top:248px;transform:scaleX(1.0391) rotate(0.02deg);">Interface module offline</span><svg class="ui" style="top:244.54px" viewBox="0 0 16 14" width="16" height="14"><use href="#unit"/></svg><span class="t c" style="left:499.32px;top:248px;transform:scaleX(0.9281) rotate(0.02deg);">SCL0CBF15009238</span><span class="t c" style="left:595.40px;top:248px;transform:scaleX(0.9894) rotate(0.02deg);">Synergis Cloud Link</span><span class="t c" style="left:696.77px;top:248px;transform:scaleX(0.9970) rotate(0.02deg);">2019-10-07 1:50:48 PM</span><span class="t c" style="left:821.11px;top:248px;transform:scaleX(0.9285) rotate(0.02deg);">10.23.67.71</span><span class="t c" style="left:884.20px;top:248px;transform:scaleX(0.9534) rotate(0.02deg);">10.11.217.0</span><span class="t c" style="left:974.41px;top:248px;transform:scaleX(0.9615) rotate(0.02deg);">SCL0CBF15009238 &gt; Mercury EP1502 (10.23.75.13:3001)</span>
<div class="r" style="top:260.40px"></div><span class="t c" style="left:355.03px;top:265px;transform:scaleX(1.0320) rotate(0.02deg);">Interface module online</span><svg class="ui" style="top:262.00px" viewBox="0 0 16 14" width="16" height="14"><use href="#unit"/></svg><span class="t c" style="left:499.32px;top:265px;transform:scaleX(0.9281) rotate(0.02deg);">SCL0CBF15009238</span><span class="t c" style="left:595.40px;top:265px;transform:scaleX(0.9894) rotate(0.02deg);">Synergis Cloud Link</span><span class="t c" style="left:696.77px;top:265px;transform:scaleX(0.9970) rotate(0.02deg);">2019-10-07 1:44:50 PM</span><span class="t c" style="left:821.11px;top:265px;transform:scaleX(0.9285) rotate(0.02deg);">10.23.67.71</span><span class="t c" style="left:884.20px;top:265px;transform:scaleX(0.9534) rotate(0.02deg);">10.11.217.0</span><span class="t c" style="left:974.41px;top:265px;transform:scaleX(0.9615) rotate(0.02deg);">SCL0CBF15009238 &gt; Mercury EP1502 (10.23.75.13:3001)</span>
<div class="r alt" style="top:277.86px"></div><span class="t c" style="left:355.02px;top:283px;transform:scaleX(1.0391) rotate(0.02deg);">Interface module offline</span><svg class="ui" style="top:279.46px" viewBox="0 0 16 14" width="16" height="14"><use href="#unit"/></svg><span class="t c" style="left:499.32px;top:283px;transform:scaleX(0.9281) rotate(0.02deg);">SCL0CBF15009238</span><span class="t c" style="left:595.40px;top:283px;transform:scaleX(0.9894) rotate(0.02deg);">Synergis Cloud Link</span><span class="t c" style="left:696.77px;top:283px;transform:scaleX(0.9970) rotate(0.02deg);">2019-10-07 1:44:24 PM</span><span class="t c" style="left:821.11px;top:283px;transform:scaleX(0.9285) rotate(0.02deg);">10.23.67.71</span><span class="t c" style="left:884.20px;top:283px;transform:scaleX(0.9534) rotate(0.02deg);">10.11.217.0</span><span class="t c" style="left:974.41px;top:283px;transform:scaleX(0.9615) rotate(0.02deg);">SCL0CBF15009238 &gt; Mercury EP1502 (10.23.75.13:3001)</span>
<div class="r" style="top:295.32px"></div><span class="t c" style="left:355.02px;top:300px;transform:scaleX(1.0391) rotate(0.02deg);">Interface module offline</span><svg class="ui" style="top:296.92px" viewBox="0 0 16 14" width="16" height="14"><use href="#unit"/></svg><span class="t c" style="left:499.32px;top:300px;transform:scaleX(0.9281) rotate(0.02deg);">SCL0CBF15009238</span><span class="t c" style="left:595.40px;top:300px;transform:scaleX(0.9894) rotate(0.02deg);">Synergis Cloud Link</span><span class="t c" style="left:696.77px;top:300px;transform:scaleX(0.9970) rotate(0.02deg);">2019-10-07 1:44:24 PM</span><span class="t c" style="left:821.11px;top:300px;transform:scaleX(0.9285) rotate(0.02deg);">10.23.67.71</span><span class="t c" style="left:884.20px;top:300px;transform:scaleX(0.9534) rotate(0.02deg);">10.11.217.0</span><span class="t c" style="left:974.41px;top:300px;transform:scaleX(0.9615) rotate(0.02deg);">SCL0CBF15009238 &gt; Mercury EP1502 (10.23.75.13:3001)</span><span class="t c" style="left:1238.42px;top:300px;transform:scaleX(0.9869) rotate(0.02deg);">&gt; MR52 (Port TB3 - 0)</span>
<div class="r alt" style="top:312.78px"></div><span class="t c" style="left:355.03px;top:318px;transform:scaleX(1.0320) rotate(0.02deg);">Interface module online</span><svg class="ui" style="top:314.38px" viewBox="0 0 16 14" width="16" height="14"><use href="#unit"/></svg><span class="t c" style="left:499.32px;top:318px;transform:scaleX(0.9281) rotate(0.02deg);">SCL0CBF15009238</span><span class="t c" style="left:595.40px;top:318px;transform:scaleX(0.9894) rotate(0.02deg);">Synergis Cloud Link</span><span class="t c" style="left:696.77px;top:318px;transform:scaleX(0.9970) rotate(0.02deg);">2019-10-07 1:43:44 PM</span><span class="t c" style="left:821.11px;top:318px;transform:scaleX(0.9285) rotate(0.02deg);">10.23.67.71</span><span class="t c" style="left:884.20px;top:318px;transform:scaleX(0.9534) rotate(0.02deg);">10.11.217.0</span><span class="t c" style="left:974.41px;top:318px;transform:scaleX(0.9615) rotate(0.02deg);">SCL0CBF15009238 &gt; Mercury EP1502 (10.23.75.13:3001)</span>
<div class="r" style="top:330.24px"></div><span class="t c" style="left:355.02px;top:335px;transform:scaleX(1.0391) rotate(0.02deg);">Interface module offline</span><svg class="ui" style="top:331.84px" viewBox="0 0 16 14" width="16" height="14"><use href="#unit"/></svg><span class="t c" style="left:499.32px;top:335px;transform:scaleX(0.9281) rotate(0.02deg);">SCL0CBF15009238</span><span class="t c" style="left:595.40px;top:335px;transform:scaleX(0.9894) rotate(0.02deg);">Synergis Cloud Link</span><span class="t c" style="left:696.77px;top:335px;transform:scaleX(0.9970) rotate(0.02deg);">2019-10-07 1:42:20 PM</span><span class="t c" style="left:821.11px;top:335px;transform:scaleX(0.9285) rotate(0.02deg);">10.23.67.71</span><span class="t c" style="left:884.20px;top:335px;transform:scaleX(0.9534) rotate(0.02deg);">10.11.217.0</span><span class="t c" style="left:974.41px;top:335px;transform:scaleX(0.9615) rotate(0.02deg);">SCL0CBF15009238 &gt; Mercury EP1502 (10.23.75.13:3001)</span>
<div class="r alt" style="top:347.70px"></div><span class="t c" style="left:355.03px;top:353px;transform:scaleX(1.0320) rotate(0.02deg);">Interface module online</span><svg class="ui" style="top:349.30px" viewBox="0 0 16 14" width="16" height="14"><use href="#unit"/></svg><span class="t c" style="left:499.32px;top:353px;transform:scaleX(0.9281) rotate(0.02deg);">SCL0CBF15009238</span><span class="t c" style="left:595.40px;top:353px;transform:scaleX(0.9894) rotate(0.02deg);">Synergis Cloud Link</span><span class="t c" style="left:696.77px;top:353px;transform:scaleX(0.9970) rotate(0.02deg);">2019-10-07 1:41:07 PM</span><span class="t c" style="left:821.11px;top:353px;transform:scaleX(0.9285) rotate(0.02deg);">10.23.67.71</span><span class="t c" style="left:884.20px;top:353px;transform:scaleX(0.9534) rotate(0.02deg);">10.11.217.0</span><span class="t c" style="left:974.41px;top:353px;transform:scaleX(0.9650) rotate(0.02deg);">SCL0CBF15009238 &gt; Mercury LP2500 (10.23.75.66:3001)</span>
<div class="r" style="top:365.16px"></div><span class="t c" style="left:355.02px;top:370px;transform:scaleX(1.0391) rotate(0.02deg);">Interface module offline</span><svg class="ui" style="top:366.76px" viewBox="0 0 16 14" width="16" height="14"><use href="#unit"/></svg><span class="t c" style="left:499.32px;top:370px;transform:scaleX(0.9281) rotate(0.02deg);">SCL0CBF15009238</span><span class="t c" style="left:595.40px;top:370px;transform:scaleX(0.9894) rotate(0.02deg);">Synergis Cloud Link</span><span class="t c" style="left:696.77px;top:370px;transform:scaleX(0.9970) rotate(0.02deg);">2019-10-07 1:17:47 PM</span><span class="t c" style="left:821.11px;top:370px;transform:scaleX(0.9285) rotate(0.02deg);">10.23.67.71</span><span class="t c" style="left:884.20px;top:370px;transform:scaleX(0.9534) rotate(0.02deg);">10.11.217.0</span><span class="t c" style="left:974.41px;top:370px;transform:scaleX(0.9615) rotate(0.02deg);">SCL0CBF15009238 &gt; Mercury EP1502 (10.23.75.58:3007)</span>
<div class="r alt" style="top:382.62px"></div><span class="t c" style="left:355.02px;top:388px;transform:scaleX(1.0391) rotate(0.02deg);">Interface module offline</span><svg class="ui" style="top:384.22px" viewBox="0 0 16 14" width="16" height="14"><use href="#unit"/></svg><span class="t c" style="left:499.32px;top:388px;transform:scaleX(0.9281) rotate(0.02deg);">SCL0CBF15009238</span><span class="t c" style="left:595.40px;top:388px;transform:scaleX(0.9894) rotate(0.02deg);">Synergis Cloud Link</span><span class="t c" style="left:696.77px;top:388px;transform:scaleX(0.9970) rotate(0.02deg);">2019-10-07 1:07:39 PM</span><span class="t c" style="left:821.11px;top:388px;transform:scaleX(0.9285) rotate(0.02deg);">10.23.67.71</span><span class="t c" style="left:884.20px;top:388px;transform:scaleX(0.9534) rotate(0.02deg);">10.11.217.0</span><span class="t c" style="left:974.41px;top:388px;transform:scaleX(0.9650) rotate(0.02deg);">SCL0CBF15009238 &gt; Mercury LP2500 (10.23.75.66:3001)</span>
<div class="r" style="top:400.08px"></div><span class="t c" style="left:355.02px;top:405px;transform:scaleX(1.0391) rotate(0.02deg);">Interface module offline</span><svg class="ui" style="top:401.68px" viewBox="0 0 16 14" width="16" height="14"><use href="#unit"/></svg><span class="t c" style="left:499.32px;top:405px;transform:scaleX(0.9281) rotate(0.02deg);">SCL0CBF15009238</span><span class="t c" style="left:595.40px;top:405px;transform:scaleX(0.9894) rotate(0.02deg);">Synergis Cloud Link</span><span class="t c" style="left:696.77px;top:405px;transform:scaleX(0.9914) rotate(0.02deg);">2019-10-07 12:59:56 PM</span><span class="t c" style="left:821.11px;top:405px;transform:scaleX(0.9285) rotate(0.02deg);">10.23.67.71</span><span class="t c" style="left:884.20px;top:405px;transform:scaleX(0.9534) rotate(0.02deg);">10.11.217.0</span><span class="t c" style="left:974.41px;top:405px;transform:scaleX(0.9615) rotate(0.02deg);">SCL0CBF15009238 &gt; Mercury EP1502 (10.23.75.13:3001)</span>
<div class="r alt" style="top:417.54px"></div><span class="t c" style="left:355.03px;top:422px;transform:scaleX(1.0320) rotate(0.02deg);">Interface module online</span><svg class="ui" style="top:419.14px" viewBox="0 0 16 14" width="16" height="14"><use href="#unit"/></svg><span class="t c" style="left:499.32px;top:422px;transform:scaleX(0.9281) rotate(0.02deg);">SCL0CBF15009238</span><span class="t c" style="left:595.40px;top:422px;transform:scaleX(0.9894) rotate(0.02deg);">Synergis Cloud Link</span><span class="t c" style="left:696.77px;top:422px;transform:scaleX(0.9914) rotate(0.02deg);">2019-10-07 12:56:57 PM</span><span class="t c" style="left:821.11px;top:422px;transform:scaleX(0.9285) rotate(0.02deg);">10.23.67.71</span><span class="t c" style="left:884.20px;top:422px;transform:scaleX(0.9534) rotate(0.02deg);">10.11.217.0</span><span class="t c" style="left:974.41px;top:422px;transform:scaleX(0.9650) rotate(0.02deg);">SCL0CBF15009238 &gt; Mercury LP2500 (10.23.75.66:3001)</span>
<div class="r" style="top:435.00px"></div><span class="t c" style="left:355.02px;top:440px;transform:scaleX(1.0391) rotate(0.02deg);">Interface module offline</span><svg class="ui" style="top:436.60px" viewBox="0 0 16 14" width="16" height="14"><use href="#unit"/></svg><span class="t c" style="left:499.32px;top:440px;transform:scaleX(0.9281) rotate(0.02deg);">SCL0CBF15009238</span><span class="t c" style="left:595.40px;top:440px;transform:scaleX(0.9894) rotate(0.02deg);">Synergis Cloud Link</span><span class="t c" style="left:696.77px;top:440px;transform:scaleX(0.9914) rotate(0.02deg);">2019-10-07 12:46:16 PM</span><span class="t c" style="left:821.11px;top:440px;transform:scaleX(0.9285) rotate(0.02deg);">10.23.67.71</span><span class="t c" style="left:884.20px;top:440px;transform:scaleX(0.9534) rotate(0.02deg);">10.11.217.0</span><span class="t c" style="left:974.41px;top:440px;transform:scaleX(0.9615) rotate(0.02deg);">SCL0CBF15009238 &gt; Mercury EP1502 (10.23.75.13:3001)</span>

<!-- h scrollbar -->
<svg class="abs" style="left:299px;top:536.5px" width="5" height="7" viewBox="0 0 5 7"><path d="M4.5 0 L0.3 3.5 L4.5 7Z" fill="#b0b0b0"/></svg>
<div class="abs" style="left:307.2px;top:534.2px;width:1069.3px;height:11px;border-radius:5.5px 0 0 5.5px;background:linear-gradient(#2c2c2c,#1a1a1a 55%,#161616);border:1px solid #666;border-right:none;border-bottom-color:#333"></div>
<div class="abs" style="left:1376.6px;top:543px;width:1.4px;height:6px;background:#eee;border-radius:1px 0 0 0"></div>
</div>
</body></html>
